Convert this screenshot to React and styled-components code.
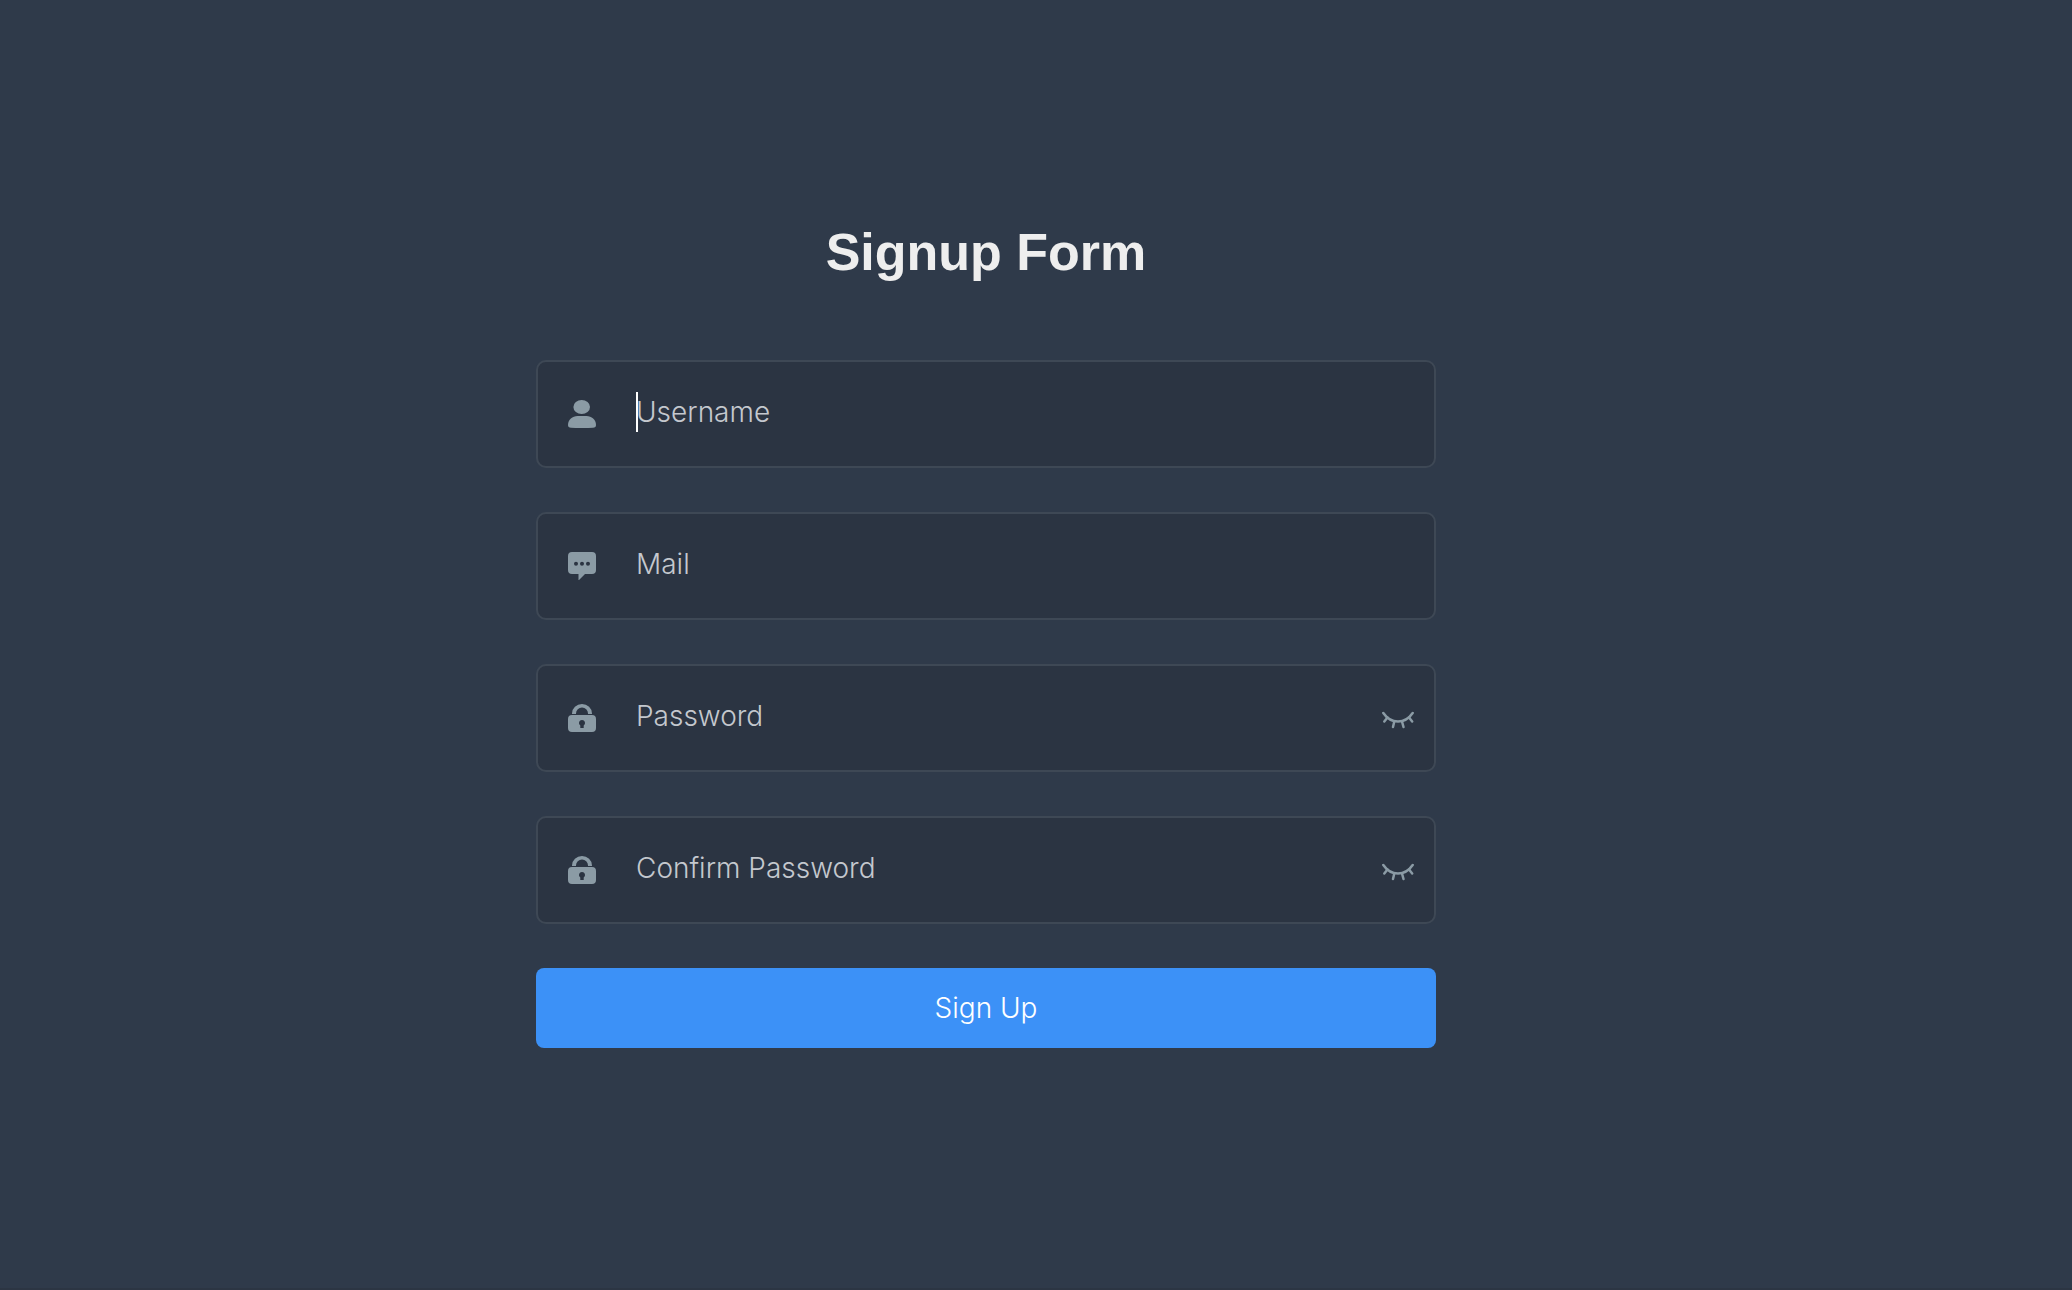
import React, { useState } from "react";
import styled, { createGlobalStyle } from "styled-components";

const GlobalStyle = createGlobalStyle`
  *, *::before, *::after { box-sizing: border-box; }
  body { margin: 0; background: #2f3a4a; }
`;

const Page = styled.main`
  min-height: 100vh;
  padding: 220px 100px 0 0;
  background: #2f3a4a;
  border-bottom: 2px solid #2c3543;
  font-family: Inter, "Liberation Sans", sans-serif;
`;

const Form = styled.form`
  display: flex;
  flex-direction: column;
  gap: 44px;
  width: 100%;
  max-width: 900px;
  margin: 0 auto;
`;

const Title = styled.h1`
  margin: 0 0 32px;
  font: 700 52px/64px "Liberation Sans", Arial, sans-serif;
  color: #eeeeee;
  text-align: center;
`;

const Field = styled.div`
  display: flex;
  align-items: center;
  height: 108px;
  padding: 0 20px 0 30px;
  border: 2px solid #3e4855;
  border-radius: 10px;
  background: #2b3442;
  color: #8b9ba5;
`;

const IconLabel = styled.label`
  display: flex;
  flex: none;
  margin-right: 40px;
`;

const Control = styled.div`
  position: relative;
  flex: 1;
  min-width: 0;
`;

const TextBox = styled.input`
  display: block;
  width: 100%;
  height: 94px;
  margin: 0;
  padding: 0 0 4px;
  border: 0;
  outline: 0;
  background: transparent;
  color: #ffffff;
  caret-color: #ffffff;
  font: 300 28px/40px Inter, "Liberation Sans", sans-serif;

  &::placeholder {
    color: #c4c8ce;
    opacity: 1;
  }
`;

const Caret = styled.span`
  position: absolute;
  top: 25px;
  left: 0;
  width: 2px;
  height: 40px;
  background: #ffffff;
`;

const Reveal = styled.button`
  display: flex;
  flex: none;
  padding: 0;
  border: 0;
  background: transparent;
  color: inherit;
  cursor: pointer;
`;

const Submit = styled.button`
  height: 80px;
  padding: 0;
  border: 0;
  border-radius: 8px;
  background: #3c91f7;
  color: #ffffff;
  font: 300 28px/40px Inter, "Liberation Sans", sans-serif;
  cursor: pointer;
`;

const UserIcon = () => (
  <svg width="28" height="28" viewBox="0 0 28 28" fill="currentColor" aria-hidden="true">
    <ellipse cx="13.7" cy="7" rx="8.3" ry="7" />
    <path d="M0 25C0 19.5 4.5 16 9.5 16h9C23.500 16 28 19.500 28 25c0 2-1 2.700-3 2.800Q14 28.400 3 27.800C1 27.700 0 27 0 25Z" />
  </svg>
);

const MessageIcon = () => (
  <svg width="28" height="28" viewBox="0 0 28 28" fill="currentColor" aria-hidden="true">
    <path
      fillRule="evenodd"
      d="M4 0h20a4 4 0 0 1 4 4v14a4 4 0 0 1-4 4h-7l-6.500 6.500V22H4a4 4 0 0 1-4-4V4a4 4 0 0 1 4-4Zm4 9.800a2 2 0 1 0 0 4 2 2 0 0 0 0-4Zm6 0a2 2 0 1 0 0 4 2 2 0 0 0 0-4Zm6 0a2 2 0 1 0 0 4 2 2 0 0 0 0-4Z"
    />
  </svg>
);

const LockIcon = () => (
  <svg width="28" height="28" viewBox="0 0 28 28" fill="currentColor" aria-hidden="true">
    <path d="M4 10V9.500a10 9.500 0 0 1 20 0V10h-4v-.5a6 6 0 0 0-12 0v.5Z" />
    <path
      fillRule="evenodd"
      d="M4 11h20a4 4 0 0 1 4 4v9a4 4 0 0 1-4 4H4a4 4 0 0 1-4-4v-9a4 4 0 0 1 4-4Zm10 5a3 3 0 0 0-1.700 5.500V24h3.400v-2.500A3 3 0 0 0 14 16Z"
    />
  </svg>
);

const EyeIcon = ({ open }) => (
  <svg width="32" height="32" viewBox="0 0 32 32" fill="none" stroke="currentColor" strokeWidth="2.5" strokeLinecap="round" aria-hidden="true">
    <path d="M1.300 11c7.700 11.300 21.700 11.300 29.400 0" />
    {open ? (
      <path d="M1.300 11c7.700-11.300 21.700-11.300 29.400 0M16 7v7" />
    ) : (
      <path d="M5.500 15.500 2.300 19.500M12.300 19.500 11 25M20 19.500l1.500 5.500M27 15.500l3.200 4" />
    )}
  </svg>
);

const fields = [
  { id: "username", label: "Username", type: "text", icon: <UserIcon />, active: true },
  { id: "mail", label: "Mail", type: "email", icon: <MessageIcon /> },
  { id: "password", label: "Password", type: "password", icon: <LockIcon />, secret: true },
  { id: "confirm", label: "Confirm Password", type: "password", icon: <LockIcon />, secret: true },
];

function FormField({ id, label, type, icon, active, secret }) {
  const [shown, setShown] = useState(false);
  const [value, setValue] = useState("");
  return (
    <Field>
      <IconLabel htmlFor={id} aria-label={label}>{icon}</IconLabel>
      <Control>
        <TextBox
          id={id}
          name={id}
          type={shown ? "text" : type}
          placeholder={label}
          value={value}
          onChange={(e) => setValue(e.target.value)}
        />
        {active && !value && <Caret aria-hidden="true" />}
      </Control>
      {secret && (
        <Reveal type="button" aria-label={`Show ${label}`} aria-pressed={shown} onClick={() => setShown(!shown)}>
          <EyeIcon open={shown} />
        </Reveal>
      )}
    </Field>
  );
}

export default function App() {
  return (
    <Page>
      <GlobalStyle />
      <Form onSubmit={(e) => e.preventDefault()}>
        <Title>Signup Form</Title>
        {fields.map((f) => (
          <FormField key={f.id} {...f} />
        ))}
        <Submit type="submit">Sign Up</Submit>
      </Form>
    </Page>
  );
}
